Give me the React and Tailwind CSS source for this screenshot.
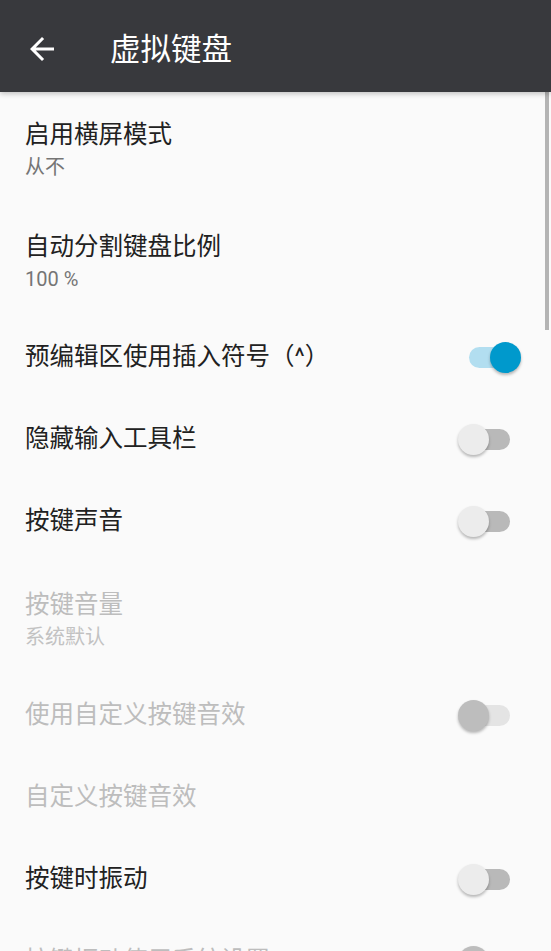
import React from 'react';

function Toggle({ on = false, disabled = false }) {
  if (on) {
    return (
      <div className="relative w-[52px] h-[31px] mr-[30px] shrink-0">
        <div className="absolute left-0 top-[5px] w-[49px] h-[21px] rounded-full bg-[#b2def0]" />
        <div className="absolute right-0 top-0 w-[31px] h-[31px] rounded-full bg-[#0099cc] shadow-[0_2px_3px_rgba(0,0,0,0.28)]" />
      </div>
    );
  }
  return (
    <div className="relative w-[52px] h-[31px] mr-[41px] shrink-0">
      <div
        className={`absolute left-[3px] right-0 top-[5px] h-[21px] rounded-full ${
          disabled ? 'bg-[#e4e4e4]' : 'bg-[#b9b9b9]'
        }`}
      />
      <div
        className={`absolute left-0 top-0 w-[31px] h-[31px] rounded-full shadow-[0_2px_3px_rgba(0,0,0,0.28)] ${
          disabled ? 'bg-[#bdbdbd]' : 'bg-[#ececec]'
        }`}
      />
    </div>
  );
}

function Row({ title, summary, toggle, on, disabled }) {
  const titleCls = `text-[24.5px] leading-[32px] ${disabled ? 'text-[#bdbdbd]' : 'text-[#212121]'}`;

  // two-line rows: title + summary
  if (summary) {
    return (
      <div className="h-[112px] shrink-0 flex flex-col pl-[25px] pt-[27px]">
        <span className={titleCls}>{title}</span>
        <span
          className={`mt-[1px] text-[20px] leading-[30px] ${
            disabled ? 'text-[#c2c2c2]' : 'text-[#757575]'
          }`}
        >
          {summary}
        </span>
      </div>
    );
  }

  return (
    <div className="h-[82px] shrink-0 flex items-center justify-between pl-[25px]">
      <span className={titleCls}>{title}</span>
      {toggle && <Toggle on={on} disabled={disabled} />}
    </div>
  );
}

const rows = [
  { title: '启用横屏模式', summary: '从不' },
  { title: '自动分割键盘比例', summary: '100 %' },
  { title: '预编辑区使用插入符号（^）', toggle: true, on: true },
  { title: '隐藏输入工具栏', toggle: true },
  { title: '按键声音', toggle: true },
  { title: '按键音量', summary: '系统默认', disabled: true },
  { title: '使用自定义按键音效', toggle: true, disabled: true },
  { title: '自定义按键音效', disabled: true },
  { title: '按键时振动', toggle: true },
  { title: '按键振动使用系统设置', toggle: true, disabled: true },
];

export default function App() {
  return (
    <div className="relative w-[551px] h-[951px] overflow-hidden bg-[#fafafa] flex flex-col font-['Roboto','Noto_Sans_CJK_SC',sans-serif]">
      {/* Toolbar */}
      <div className="relative z-10 h-[92px] shrink-0 bg-[#38393d] flex items-center shadow-[0_2px_5px_rgba(0,0,0,0.22)]">
        <svg
          className="ml-[24px] mt-[6px]"
          width="36"
          height="36"
          viewBox="0 0 24 24"
          fill="#ffffff"
        >
          <path d="M20 11H7.83l5.59-5.59L12 4l-8 8 8 8 1.41-1.41L7.83 13H20v-2z" />
        </svg>
        <span className="ml-[50px] mt-[8px] text-[30.5px] text-white leading-none">虚拟键盘</span>
      </div>

      {/* Settings list */}
      <div className="flex flex-col">
        {rows.map((r) => (
          <Row key={r.title} {...r} />
        ))}
      </div>

      {/* Scrollbar */}
      <div className="absolute right-[2px] top-[92px] w-[4px] h-[238px] bg-[#b4b4b4]" />
    </div>
  );
}
